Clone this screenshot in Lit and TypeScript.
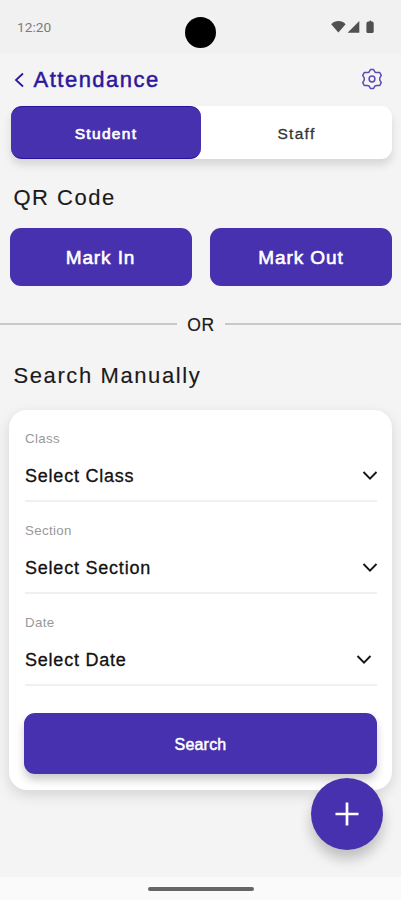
import { LitElement, html, css, svg } from "lit";
import { customElement, property } from "lit/decorators.js";

const chevron = svg`<path d="M1.5 2 L8 8.6 L14.5 2" fill="none" stroke="#151515" stroke-width="1.9"/>`;

@customElement("select-field")
class SelectField extends LitElement {
  @property() label = "";
  @property() text = "";
  static styles = css`
    :host { display: block; height: 92px; border-bottom: 2px solid #f0f0f0; box-sizing: border-box; }
    .label { font-size: 13.3px; line-height: 16px; letter-spacing: 0.35px; color: #999; padding-top: 21px; }
    .row { display: flex; justify-content: space-between; align-items: center; height: 24px; margin-top: 17px; }
    .value { font-size: 18px; line-height: 24px; letter-spacing: 0.78px; color: #111; -webkit-text-stroke: 0.3px #111; }
    svg { display: block; width: 16px; height: 11px; margin: -2px -1px 0 0; }
    :host([inset]) svg { margin-right: 5px; }
  `;
  render() {
    return html`
      <div class="label">${this.label}</div>
      <div class="row">
        <span class="value">${this.text}</span>
        <svg viewBox="0 0 16 11">${chevron}</svg>
      </div>
    `;
  }
}

@customElement("app-root")
class AppRoot extends LitElement {
  static styles = css`
    :host {
      display: flex; flex-direction: column; position: relative; width: 401px; height: 900px;
      overflow: hidden; background: #f4f4f4; color: #1a1a1a;
      font-family: "Liberation Sans", Arial, sans-serif;
    }
    * { box-sizing: border-box; }
    .status {
      height: 53px; flex: none; background: #f1f1f1; display: flex; justify-content: space-between;
      padding: 0 27px 0 17px; font-family: Roboto, sans-serif; font-size: 13.7px; line-height: 54px; color: #7c7c7c;
    }
    .camera { position: absolute; left: 185px; top: 17px; width: 31px; height: 31px; border-radius: 50%; background: #000; }
    .signals { width: 43px; height: 14px; margin-top: 20px; display: block; }
    .header { display: flex; align-items: center; height: 53px; flex: none; padding: 0 18px 0 14px; color: #2c189c; }
    .back { width: 11px; height: 16px; display: block; }
    .title { font-size: 22px; line-height: 26px; letter-spacing: 1.5px; margin-left: 8.5px; -webkit-text-stroke: 0.5px #2c189c; flex: 1; }
    .gear { width: 22px; height: 22px; display: block; margin-top: -2px; }
    .tabs {
      display: flex; height: 53px; flex: none; margin: 0 9px 0 11px; border-radius: 11px; background: #fff;
      box-shadow: 0 6px 9px rgba(0, 0, 0, 0.12);
    }
    .tab { flex: 1; text-align: center; font-size: 15.5px; line-height: 55px; letter-spacing: 1.3px; color: #333; -webkit-text-stroke: 0.3px #333; }
    .active { flex: 0 0 190px; background: #4831ae; color: #fff; border-radius: 11px; -webkit-text-stroke: 0.7px #fff; border-bottom: 1px solid #2b139b; border-top: 1px solid #2b139b; line-height: 53px; }
    .heading { font-size: 22px; line-height: 28px; flex: none; padding-left: 13.5px; color: #1a1a1a; letter-spacing: 1.5px; -webkit-text-stroke: 0.15px #1a1a1a; }
    .qr { margin-top: 25px; }
    .manual { margin-top: 28px; letter-spacing: 1.6px; }
    .marks { display: grid; grid-template-columns: 182px 182px; gap: 18.5px; margin: 16px 0 0 9.5px; flex: none; }
    .mark {
      height: 58px; border-radius: 11px; background: #4831ae; color: #fff; text-align: center;
      font-size: 19px; line-height: 60px; letter-spacing: 0.9px; -webkit-text-stroke: 0.6px #fff;
    }
    .or { display: flex; align-items: center; height: 20px; margin-top: 28px; flex: none; font-size: 17.5px; line-height: 20px; letter-spacing: 0.6px; }
    .or i { flex: 1; height: 2px; background: #c8c8c8; margin-top: -1px; }
    .or span { width: 48px; text-align: center; padding: 2px 0 0 1px; -webkit-text-stroke: 0.2px #1a1a1a; }
    .card {
      margin: 20px 9px 0; height: 380px; flex: none; background: #fff; border-radius: 18px;
      padding: 0 15px 0 15px; box-shadow: 0 5px 14px rgba(0, 0, 0, 0.13);
    }
    .fields { display: block; padding-left: 1px; }
    .search {
      height: 61px; margin-top: 27px; border-radius: 11px; background: #4831ae; color: #fff; text-align: center;
      font-size: 16px; line-height: 63px; letter-spacing: 0.2px; -webkit-text-stroke: 0.5px #fff;
      box-shadow: 0 6px 8px rgba(0, 0, 0, 0.2);
    }
    .fab {
      position: absolute; left: 311.4px; top: 778px; width: 72px; height: 72px; border-radius: 50%; background: #4831ae;
      box-shadow: 0 9px 13px rgba(0, 0, 0, 0.22); display: grid; place-items: center;
    }
    .plus { width: 24px; height: 24px; display: block; }
    .nav { margin-top: auto; height: 23px; flex: none; background: #fafafa; display: flex; justify-content: center; }
    .pill { width: 106px; height: 4px; border-radius: 2px; background: #666; margin-top: 10px; }
  `;
  render() {
    return html`
      <div class="status">
        <span>12:20</span>
        <svg class="signals" viewBox="0 0 43 14" fill="#505050">
          <path d="M0.2 4.2 C4 0 11 0 14.6 4.2 L7.4 12.4Z" />
          <path d="M28.3 1 V12.7 H16.6Z" />
          <path d="M37 1.5 H38.3 Q38.5 0.6 39.3 0.6 Q40.1 0.6 40.3 1.5 H41.5 Q42.7 2 42.7 3.5 V11.5 Q42.7 13 41 13 H37 Q35.4 13 35.4 11.5 V3.5 Q35.4 2 37 1.5Z" />
        </svg>
      </div>
      <div class="camera"></div>
      <div class="header">
        <svg class="back" viewBox="0 0 11 16" fill="none" stroke="#2c189c" stroke-width="1.8">
          <path d="M9 1.5 L2 8 L9 14.5" />
        </svg>
        <div class="title">Attendance</div>
        <svg class="gear" viewBox="0 0 22 22" fill="none" stroke="#5b4bb5" stroke-width="1.5" stroke-linejoin="round">
          <path d="M9.4 1.5 H12.6 L13.8 3.8 Q14.8 4.6 16 4.6 L18.6 4.4 L20.3 7.4 L18.9 9.6 Q18.4 11 18.9 12.4 L20.3 14.6 L18.6 17.6 L16 17.4 Q14.8 17.4 13.8 18.2 L12.6 20.5 H9.4 L8.2 18.2 Q7.2 17.4 6 17.4 L3.4 17.6 L1.7 14.6 L3.1 12.4 Q3.6 11 3.1 9.6 L1.7 7.4 L3.4 4.4 L6 4.6 Q7.2 4.6 8.2 3.8Z" />
          <circle cx="11" cy="11" r="2.9" />
        </svg>
      </div>
      <div class="tabs">
        <div class="tab active">Student</div>
        <div class="tab">Staff</div>
      </div>
      <div class="heading qr">QR Code</div>
      <div class="marks">
        <div class="mark">Mark In</div>
        <div class="mark">Mark Out</div>
      </div>
      <div class="or"><i></i><span>OR</span><i></i></div>
      <div class="heading manual">Search Manually</div>
      <div class="card">
        <div class="fields">
          <select-field label="Class" text="Select Class"></select-field>
          <select-field label="Section" text="Select Section"></select-field>
          <select-field label="Date" text="Select Date" inset></select-field>
        </div>
        <div class="search">Search</div>
      </div>
      <div class="fab">
        <svg class="plus" viewBox="0 0 24 24" stroke="#fff" stroke-width="2.7"><path d="M12 0.5 V23.5 M0.5 12 H23.5" /></svg>
      </div>
      <div class="nav"><div class="pill"></div></div>
    `;
  }
}
